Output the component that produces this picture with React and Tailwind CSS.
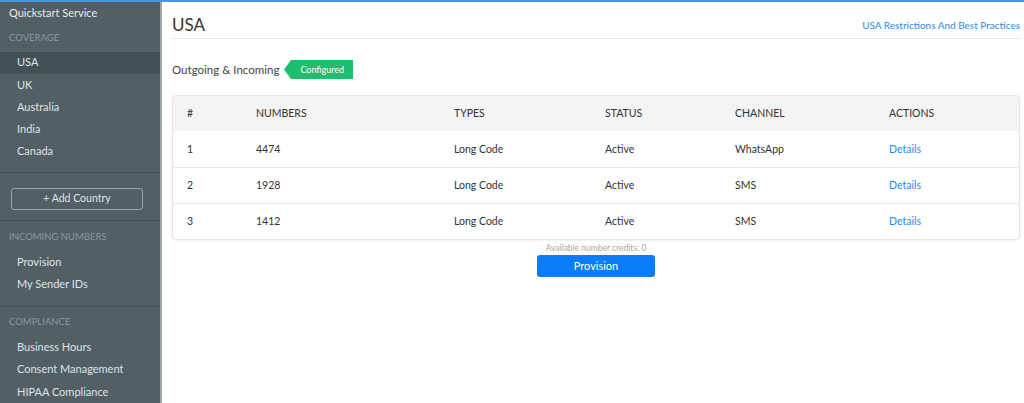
import React from "react";

const coverage = ["USA", "UK", "Australia", "India", "Canada"];

const rows = [
  { id: 1, number: "4474", type: "Long Code", status: "Active", channel: "WhatsApp" },
  { id: 2, number: "1928", type: "Long Code", status: "Active", channel: "SMS" },
  { id: 3, number: "1412", type: "Long Code", status: "Active", channel: "SMS" },
];

const cols = "grid grid-cols-[69px_198px_151px_130px_154px_1fr] pl-[14px] items-center";

const SideItem = ({ label, active }) => (
  <div
    className={`h-[22.5px] flex items-center pl-[17px] text-[11px] text-[#dfe3e5] ${
      active ? "bg-[#454f56]" : ""
    }`}
  >
    {label}
  </div>
);

const SideHeading = ({ label }) => (
  <div className="pl-[9px] h-[24px] mb-[2px] flex items-center text-[9.5px] uppercase text-[#8d979d]">
    {label}
  </div>
);

const App = () => {
  return (
    <div
      className="w-[1024px] h-[403px] overflow-hidden flex flex-col bg-white"
      style={{ fontFamily: "Lato, 'Open Sans', sans-serif" }}
    >
      <div className="h-[2px] bg-[#4d93de] shrink-0" />
      <div className="flex flex-1 min-h-0">
        {/* sidebar */}
        <aside className="w-[162px] shrink-0 bg-[#535e65] border-r-2 border-[#9ea6ab] flex flex-col">
          <div className="pl-[9px] h-[22px] flex items-center text-[11px] text-[#e8ebed]">
            Quickstart Service
          </div>
          <div className="mt-[2px]">
            <SideHeading label="Coverage" />
          </div>
          {coverage.map((c) => (
            <SideItem key={c} label={c} active={c === "USA"} />
          ))}
          <div className="mt-[10px] border-t border-[#475157]" />
          <div className="pl-[11px] pt-[11px] pb-[10px]">
            <button className="w-[132px] h-[22px] rounded-[3px] border border-[#99a2a7] text-[10.5px] text-[#dfe3e5]">
              + Add Country
            </button>
          </div>
          <div className="border-t border-[#475157]" />
          <div className="mt-[4px]">
            <SideHeading label="Incoming Numbers" />
          </div>
          <SideItem label="Provision" />
          <SideItem label="My Sender IDs" />
          <div className="mt-[10px] border-t border-[#475157]" />
          <div className="mt-[4px]">
            <SideHeading label="Compliance" />
          </div>
          <SideItem label="Business Hours" />
          <SideItem label="Consent Management" />
          <SideItem label="HIPAA Compliance" />
        </aside>

        {/* main */}
        <main className="flex-1 pl-[10px] pr-[4px]">
          <div className="flex items-end justify-between h-[37px] border-b border-[#e6e6e6]">
            <h1 className="text-[17px] leading-[20px] text-[#333] pb-[3px]">USA</h1>
            <a className="text-[10px] leading-[14px] text-[#2d8ae6] pb-[6px]">
              USA Restrictions And Best Practices
            </a>
          </div>

          <div className="flex items-center mt-[21px] h-[19px]">
            <span className="text-[11.5px] text-[#444]">Outgoing &amp; Incoming</span>
            <span className="ml-[5px] flex items-center">
              <svg width="7" height="19" viewBox="0 0 7 19" className="block">
                <polygon points="7,0 0,9.5 7,19" fill="#1fbe6c" />
              </svg>
              <span className="h-[19px] bg-[#1fbe6c] text-white text-[9px] flex items-center pl-[9px] pr-[9px]">
                Configured
              </span>
            </span>
          </div>

          <div className="mt-[16px] rounded-[4px] border border-[#e4e4e4] shadow-[0_1px_2px_rgba(0,0,0,0.06)] overflow-hidden">
            <div className={`${cols} h-[35px] bg-[#f4f4f4] text-[10.5px] uppercase text-[#333]`}>
              <div>#</div>
              <div>Numbers</div>
              <div>Types</div>
              <div>Status</div>
              <div>Channel</div>
              <div>Actions</div>
            </div>
            {rows.map((r, i) => (
              <div
                key={r.id}
                className={`${cols} h-[36px] pt-[1px] text-[10.5px] text-[#333] ${
                  i > 0 ? "border-t border-[#e6e6e6]" : ""
                }`}
              >
                <div>{r.id}</div>
                <div>{r.number}</div>
                <div>{r.type}</div>
                <div>{r.status}</div>
                <div>{r.channel}</div>
                <div className="text-[#1d8cf8]">Details</div>
              </div>
            ))}
          </div>

          <div className="flex flex-col items-center">
            <div className="mt-[2px] text-[8.5px] leading-[12px] text-[#a9a9a9]">
              Available number credits: 0
            </div>
            <button className="mt-[1px] w-[118px] h-[22px] rounded-[3px] bg-[#0a7cf7] text-white text-[11px]">
              Provision
            </button>
          </div>
        </main>
      </div>
    </div>
  );
};

export default App;
